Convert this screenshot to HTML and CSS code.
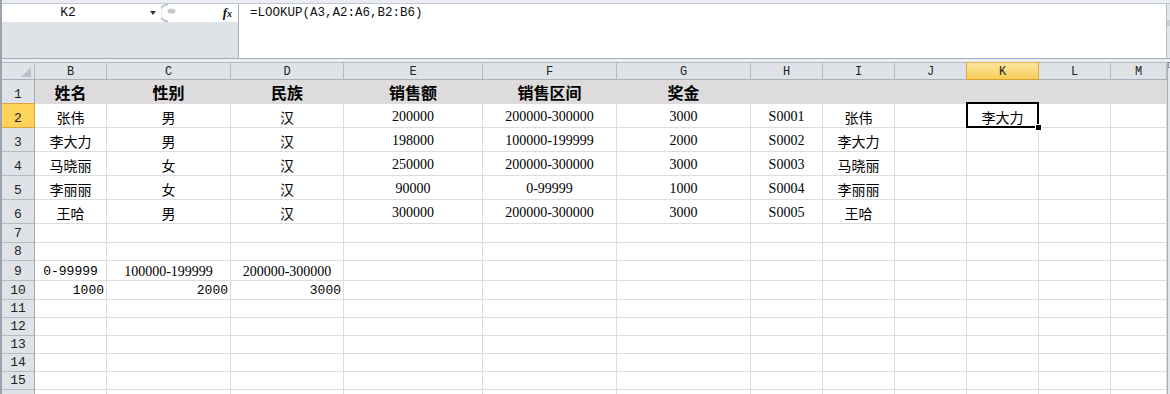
FILE: index.html
```html
<!DOCTYPE html>
<html lang="zh-CN">
<head>
<meta charset="utf-8">
<title>LOOKUP</title>
<link rel="stylesheet" href="styles.css">
</head>
<body>
<div class="app">
  <div class="fbar">
    <div class="fbar-left">
      <div class="namebox-row">
        <div class="namebox">K2</div>
        <span class="caret"></span>
        <svg class="knob" width="16" height="18" viewBox="0 0 16 18"><path d="M7 0.5 A8.5 8.5 0 0 0 7 17.5" fill="none" stroke="#aab1ba" stroke-width="1.2"/><path d="M7 2 A7 7 0 0 0 7 16" fill="none" stroke="#e4e7eb" stroke-width="1"/><ellipse cx="10.5" cy="7" rx="4" ry="2.6" fill="#c3c8cf"/></svg>
        <span class="fx">f<span class="fx-x">x</span></span>
      </div>
      <div class="fbar-pad"></div>
    </div>
    <div class="formula">=LOOKUP(A3,A2:A6,B2:B6)</div>
    <div class="edge"><span class="edge-box"></span></div>
  </div>

  <div class="sheet-wrap">
    <div class="sheet">
      <div class="corner"><svg width="10" height="10" viewBox="0 0 10 10"><path d="M10 0 L10 10 L0 10 Z" fill="#bcc2ca"/></svg></div>
      <div class="ch">B</div><div class="ch">C</div><div class="ch">D</div><div class="ch">E</div><div class="ch">F</div><div class="ch">G</div><div class="ch">H</div><div class="ch">I</div><div class="ch">J</div><div class="chsel">K</div><div class="ch">L</div><div class="ch">M</div>

      <div class="rh">1</div>
      <div class="c h1">姓名</div><div class="c h1">性别</div><div class="c h1">民族</div><div class="c h1">销售额</div><div class="c h1">销售区间</div><div class="c h1">奖金</div><div class="c h1"></div><div class="c h1"></div><div class="c h1"></div><div class="c h1"></div><div class="c h1"></div><div class="c h1"></div>

      <div class="rhsel">2</div>
      <div class="c z">张伟</div><div class="c z">男</div><div class="c z">汉</div><div class="c n">200000</div><div class="c n">200000-300000</div><div class="c n">3000</div><div class="c n">S0001</div><div class="c z">张伟</div><div class="c"></div><div class="c z active">李大力</div><div class="c"></div><div class="c"></div>

      <div class="rh">3</div>
      <div class="c z">李大力</div><div class="c z">男</div><div class="c z">汉</div><div class="c n">198000</div><div class="c n">100000-199999</div><div class="c n">2000</div><div class="c n">S0002</div><div class="c z">李大力</div><div class="c"></div><div class="c"></div><div class="c"></div><div class="c"></div>

      <div class="rh">4</div>
      <div class="c z">马晓丽</div><div class="c z">女</div><div class="c z">汉</div><div class="c n">250000</div><div class="c n">200000-300000</div><div class="c n">3000</div><div class="c n">S0003</div><div class="c z">马晓丽</div><div class="c"></div><div class="c"></div><div class="c"></div><div class="c"></div>

      <div class="rh">5</div>
      <div class="c z">李丽丽</div><div class="c z">女</div><div class="c z">汉</div><div class="c n">90000</div><div class="c n">0-99999</div><div class="c n">1000</div><div class="c n">S0004</div><div class="c z">李丽丽</div><div class="c"></div><div class="c"></div><div class="c"></div><div class="c"></div>

      <div class="rh">6</div>
      <div class="c z">王哈</div><div class="c z">男</div><div class="c z">汉</div><div class="c n">300000</div><div class="c n">200000-300000</div><div class="c n">3000</div><div class="c n">S0005</div><div class="c z">王哈</div><div class="c"></div><div class="c"></div><div class="c"></div><div class="c"></div>

      <div class="rh">7</div>
      <div class="c"></div><div class="c"></div><div class="c"></div><div class="c"></div><div class="c"></div><div class="c"></div><div class="c"></div><div class="c"></div><div class="c"></div><div class="c"></div><div class="c"></div><div class="c"></div>

      <div class="rh">8</div>
      <div class="c"></div><div class="c"></div><div class="c"></div><div class="c"></div><div class="c"></div><div class="c"></div><div class="c"></div><div class="c"></div><div class="c"></div><div class="c"></div><div class="c"></div><div class="c"></div>

      <div class="rh">9</div>
      <div class="c m">0-99999</div><div class="c n">100000-199999</div><div class="c n">200000-300000</div><div class="c"></div><div class="c"></div><div class="c"></div><div class="c"></div><div class="c"></div><div class="c"></div><div class="c"></div><div class="c"></div><div class="c"></div>

      <div class="rh">10</div>
      <div class="c m r">1000</div><div class="c m r">2000</div><div class="c m r">3000</div><div class="c"></div><div class="c"></div><div class="c"></div><div class="c"></div><div class="c"></div><div class="c"></div><div class="c"></div><div class="c"></div><div class="c"></div>

      <div class="rh">11</div>
      <div class="c"></div><div class="c"></div><div class="c"></div><div class="c"></div><div class="c"></div><div class="c"></div><div class="c"></div><div class="c"></div><div class="c"></div><div class="c"></div><div class="c"></div><div class="c"></div>

      <div class="rh">12</div>
      <div class="c"></div><div class="c"></div><div class="c"></div><div class="c"></div><div class="c"></div><div class="c"></div><div class="c"></div><div class="c"></div><div class="c"></div><div class="c"></div><div class="c"></div><div class="c"></div>

      <div class="rh">13</div>
      <div class="c"></div><div class="c"></div><div class="c"></div><div class="c"></div><div class="c"></div><div class="c"></div><div class="c"></div><div class="c"></div><div class="c"></div><div class="c"></div><div class="c"></div><div class="c"></div>

      <div class="rh">14</div>
      <div class="c"></div><div class="c"></div><div class="c"></div><div class="c"></div><div class="c"></div><div class="c"></div><div class="c"></div><div class="c"></div><div class="c"></div><div class="c"></div><div class="c"></div><div class="c"></div>

      <div class="rh">15</div>
      <div class="c"></div><div class="c"></div><div class="c"></div><div class="c"></div><div class="c"></div><div class="c"></div><div class="c"></div><div class="c"></div><div class="c"></div><div class="c"></div><div class="c"></div><div class="c"></div>

      <div class="rh"></div>
      <div class="c"></div><div class="c"></div><div class="c"></div><div class="c"></div><div class="c"></div><div class="c"></div><div class="c"></div><div class="c"></div><div class="c"></div><div class="c"></div><div class="c"></div><div class="c"></div>
    </div>
    <div class="vscroll"><span class="vscroll-box"></span></div>
  </div>
</div>
</body>
</html>
```

FILE: styles.css
```css
html, body {
  margin: 0;
  padding: 0;
  height: 100%;
  overflow: hidden;
  background: #e9ecf0;
}

.app {
  width: 1168px;
  height: 394px;
  border-left: 2px solid #9aa4b1;
  display: flex;
  flex-direction: column;
  overflow: hidden;
}

/* ---------- formula bar ---------- */
.fbar {
  margin-top: 3px;
  height: 54px;
  border-top: 1px solid #c3c9d1;
  border-bottom: 1px solid #a6adb6;
  display: flex;
  flex: none;
}

.fbar-left {
  width: 236px;
  border-right: 1px solid #a9b0b9;
  display: flex;
  flex-direction: column;
}

.namebox-row {
  height: 18px;
  background: #ffffff;
  display: flex;
  align-items: center;
  flex: none;
}

.namebox {
  width: 132px;
  text-align: center;
  font-family: "Liberation Mono", monospace;
  font-size: 13px;
  color: #111;
  line-height: 18px;
}

.caret {
  margin-left: 16px;
  width: 0;
  height: 0;
  border-left: 3.5px solid transparent;
  border-right: 3.5px solid transparent;
  border-top: 4px solid #333;
}

.knob {
  margin-left: 5px;
  display: block;
}

.fx {
  margin-left: auto;
  margin-right: 6px;
  font-family: "Liberation Serif", serif;
  font-style: italic;
  font-weight: bold;
  font-size: 13px;
  color: #111;
  line-height: 18px;
}

.fx-x {
  font-size: 10px;
}

.fbar-pad {
  flex: 1;
  background: #dfe3e8;
}

.formula {
  flex: 1;
  background: #ffffff;
  padding-left: 11px;
  font-family: "Liberation Mono", monospace;
  font-size: 12.5px;
  line-height: 18px;
  color: #111;
}

.edge {
  width: 3px;
  background: #e3e6ea;
  border-left: 1px solid #b5bcc5;
  position: relative;
}

.edge-box {
  position: absolute;
  left: 0;
  top: 16px;
  width: 3px;
  height: 6px;
  background: #c9ced5;
}

/* ---------- sheet ---------- */
.sheet-wrap {
  margin-top: 3px;
  display: flex;
  flex: none;
}

.sheet {
  display: grid;
  grid-template-columns: 33px 72px 124px 113px 139px 134px 134px 72px 72px 72px 72px 72px 56px;
  grid-template-rows: 18px 24px 24px 24px 24px 24px 24px 19px 18px 20px 19px 18px 18px 18px 18px 18px 18px;
  background: #ffffff;
}

.corner,
.ch,
.chsel {
  border-top: 1px solid #b4bac3;
  border-bottom: 1px solid #a9b0ba;
  border-right: 1px solid #b3bac3;
  box-sizing: border-box;
}

.corner,
.ch {
  background-color: #dfe3e8;
}

.corner {
  display: flex;
  align-items: flex-end;
  justify-content: flex-end;
  padding: 0 3px 2px 0;
}

.corner svg {
  display: block;
}

.ch,
.chsel {
  display: flex;
  align-items: center;
  justify-content: center;
  font-family: "Liberation Mono", monospace;
  font-size: 12px;
  color: #222;
  padding-top: 1px;
}

.chsel {
  background-color: #f9d570;
  background-image: linear-gradient(#fde6a0, #f7cd58);
  border-top-color: #e6b14a;
  border-right-color: #e0a83c;
  border-left: 1px solid #e0a83c;
  border-bottom-color: #dda036;
  margin-left: -1px;
}

.rh,
.rhsel {
  background-color: #dfe3e8;
  border-right: 1px solid #9ea8b5;
  border-bottom: 1px solid #b4bbc5;
  box-sizing: border-box;
  display: flex;
  align-items: flex-end;
  justify-content: center;
  font-family: "Liberation Mono", monospace;
  font-size: 13px;
  line-height: 1;
  color: #222;
  padding-bottom: 2px;
}

.rhsel {
  background-color: #fed35a;
  border-top: 1px solid #e2a13a;
  border-bottom-color: #e2a13a;
  border-right-color: #e2a13a;
  margin-top: -1px;
}

.c {
  border-right: 1px solid #dadcdd;
  border-bottom: 1px solid #dadcdd;
  box-sizing: border-box;
  display: flex;
  align-items: center;
  justify-content: center;
  color: #000;
  white-space: nowrap;
  overflow: visible;
}

.c.h1 {
  background: #dddbdc;
  border-color: #dddbdc;
  font-family: "Noto Sans CJK SC", sans-serif;
  font-weight: bold;
  font-size: 16px;
  line-height: 1;
  padding-top: 1px;
}

.c.z {
  font-family: "Noto Sans CJK SC", sans-serif;
  font-size: 14px;
  line-height: 1;
  padding-top: 2px;
}

.c.n {
  font-family: "Liberation Serif", serif;
  font-size: 14px;
  line-height: 1;
  padding-top: 2px;
}

.c.m {
  font-family: "Liberation Mono", monospace;
  font-size: 13px;
  line-height: 1;
  padding-top: 1px;
}

.c.r {
  justify-content: flex-end;
  padding-right: 2px;
}

.c.active {
  position: relative;
}

.c.active::after {
  content: "";
  position: absolute;
  top: -2px;
  left: -1px;
  right: -1px;
  bottom: -1px;
  border: 2px solid #000;
}

.c.active::before {
  content: "";
  position: absolute;
  right: -4px;
  bottom: -4px;
  width: 5px;
  height: 5px;
  background: #000;
  border: 1px solid #fff;
  z-index: 2;
}

.vscroll {
  width: 3px;
  background: #e3e6ea;
  border-left: 1px solid #a9b0b9;
  position: relative;
}

.vscroll-box {
  position: absolute;
  left: 0;
  top: 0;
  width: 3px;
  height: 6px;
  border: 1px solid #8d97a3;
  box-sizing: border-box;
  background: #f3f4f6;
}
```
